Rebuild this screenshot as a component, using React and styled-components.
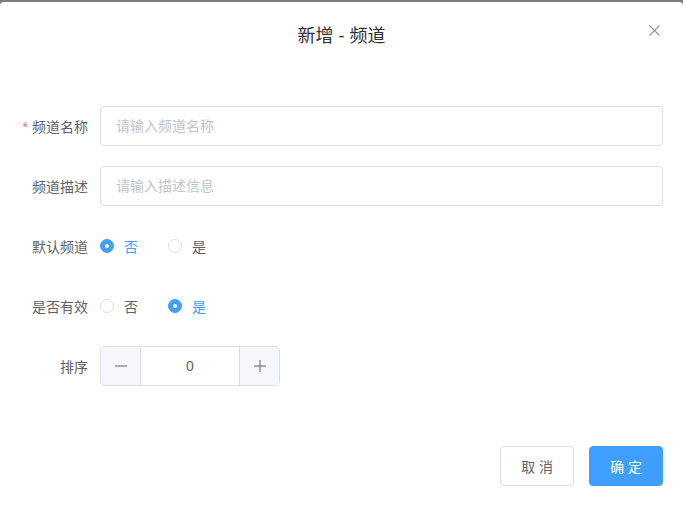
import React, { useState } from 'react';
import styled, { createGlobalStyle } from 'styled-components';

const GlobalStyle = createGlobalStyle`
  * { box-sizing: border-box; }
  html, body {
    margin: 0;
    padding: 0;
    background: #7f7f7f;
    font-family: "Liberation Sans", "Noto Sans CJK SC", sans-serif;
  }
`;

const Dialog = styled.div`
  margin-top: 2px;
  width: 683px;
  height: 503px;
  background: #fff;
  border-radius: 4px 4px 0 0;
  display: flex;
  flex-direction: column;
`;

const Header = styled.header`
  position: relative;
  padding: 22px 20px 8px;
  text-align: center;
`;

const Title = styled.span`
  font-size: 18px;
  line-height: 24px;
  color: #303133;
`;

const CloseButton = styled.button`
  position: absolute;
  top: 21px;
  right: 22px;
  width: 14px;
  height: 14px;
  padding: 0;
  border: none;
  background: none;
  cursor: pointer;
  display: flex;
  align-items: center;
  justify-content: center;
`;

const Body = styled.div`
  padding: 50px 20px 40px;
  display: flex;
  flex-direction: column;
  gap: 20px;
`;

const Item = styled.div`
  display: flex;
  height: 40px;
  align-items: center;
`;

const Label = styled.label`
  width: 80px;
  padding-right: 12px;
  text-align: right;
  font-size: 14px;
  color: #606266;
  flex-shrink: 0;

  &::before {
    content: ${({ required }) => (required ? "'*'" : 'none')};
    color: #f56c6c;
    margin-right: 4px;
  }
`;

const Input = styled.input`
  flex: 1;
  height: 40px;
  border: 1px solid #dcdfe6;
  border-radius: 4px;
  padding: 0 15px;
  font-size: 14px;
  font-family: inherit;
  color: #606266;
  outline: none;

  &::placeholder {
    color: #c0c4cc;
  }
`;

const RadioGroup = styled.div`
  display: flex;
  align-items: center;
`;

const Radio = styled.label`
  display: flex;
  align-items: center;
  margin-right: 30px;
  cursor: pointer;
  font-size: 14px;
  color: ${({ checked }) => (checked ? '#409eff' : '#606266')};
`;

const Dot = styled.span`
  width: 14px;
  height: 14px;
  border-radius: 50%;
  border: 1px solid ${({ checked }) => (checked ? '#409eff' : '#dcdfe6')};
  background: ${({ checked }) => (checked ? '#409eff' : '#fff')};
  display: flex;
  align-items: center;
  justify-content: center;
  margin-right: 10px;

  &::after {
    content: '';
    width: 4px;
    height: 4px;
    border-radius: 50%;
    background: #fff;
  }
`;

const NumberBox = styled.div`
  width: 180px;
  height: 40px;
  border: 1px solid #dcdfe6;
  border-radius: 4px;
  display: flex;
  overflow: hidden;
`;

const StepButton = styled.button`
  width: 40px;
  border: none;
  background: #f5f7fa;
  color: #606266;
  font-size: 13px;
  padding: 0;
  display: flex;
  align-items: center;
  justify-content: center;
  cursor: pointer;
  ${({ side }) => (side === 'left' ? 'border-right: 1px solid #dcdfe6;' : 'border-left: 1px solid #dcdfe6;')}
`;

const NumberValue = styled.div`
  flex: 1;
  display: flex;
  align-items: center;
  justify-content: center;
  font-size: 14px;
  color: #606266;
`;

const Footer = styled.footer`
  margin-top: auto;
  padding: 10px 20px 19px;
  display: flex;
  justify-content: flex-end;
  gap: 15px;
`;

const Button = styled.button`
  height: 40px;
  padding: 0 20px;
  border-radius: 4px;
  font-size: 14px;
  font-family: inherit;
  letter-spacing: 0;
  cursor: pointer;
  border: 1px solid ${({ primary }) => (primary ? '#409eff' : '#dcdfe6')};
  background: ${({ primary }) => (primary ? '#409eff' : '#fff')};
  color: ${({ primary }) => (primary ? '#fff' : '#606266')};
`;

function RadioPair({ value, onChange }) {
  return (
    <RadioGroup>
      {['否', '是'].map((t) => (
        <Radio key={t} checked={value === t} onClick={() => onChange(t)}>
          <Dot checked={value === t} />
          {t}
        </Radio>
      ))}
    </RadioGroup>
  );
}

export default function App() {
  const [isDefault, setIsDefault] = useState('否');
  const [valid, setValid] = useState('是');
  const [sort, setSort] = useState(0);

  return (
    <>
      <GlobalStyle />
      <Dialog>
        <Header>
          <Title>新增 - 频道</Title>
          <CloseButton aria-label="close">
            <svg width="11" height="11" viewBox="0 0 11 11">
              <path d="M0.5 0.5L10.5 10.5M10.5 0.5L0.5 10.5" stroke="#909399" strokeWidth="1.1" />
            </svg>
          </CloseButton>
        </Header>
        <Body>
          <Item>
            <Label required>频道名称</Label>
            <Input placeholder="请输入频道名称" />
          </Item>
          <Item>
            <Label>频道描述</Label>
            <Input placeholder="请输入描述信息" />
          </Item>
          <Item>
            <Label>默认频道</Label>
            <RadioPair value={isDefault} onChange={setIsDefault} />
          </Item>
          <Item>
            <Label>是否有效</Label>
            <RadioPair value={valid} onChange={setValid} />
          </Item>
          <Item>
            <Label>排序</Label>
            <NumberBox>
              <StepButton side="left" onClick={() => setSort(sort - 1)}>
                <svg width="14" height="14" viewBox="0 0 14 14">
                  <path d="M1 7H13" stroke="#606266" strokeWidth="1" />
                </svg>
              </StepButton>
              <NumberValue>{sort}</NumberValue>
              <StepButton side="right" onClick={() => setSort(sort + 1)}>
                <svg width="14" height="14" viewBox="0 0 14 14">
                  <path d="M1 7H13M7 1V13" stroke="#606266" strokeWidth="1" />
                </svg>
              </StepButton>
            </NumberBox>
          </Item>
        </Body>
        <Footer>
          <Button>取 消</Button>
          <Button primary>确 定</Button>
        </Footer>
      </Dialog>
    </>
  );
}
